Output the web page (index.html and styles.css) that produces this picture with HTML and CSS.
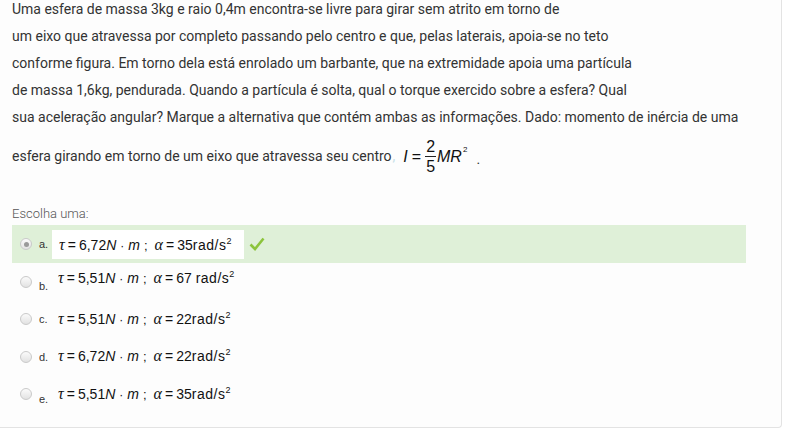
FILE: index.html
```html
<!DOCTYPE html>
<html lang="pt">
<head>
<meta charset="utf-8">
<title>Questão</title>
<link rel="stylesheet" href="styles.css">
</head>
<body>
<div class="card">
  <div class="qtext">
    <p>Uma esfera de massa 3kg e raio 0,4m encontra-se livre para girar sem atrito em torno de<br>
    um eixo que atravessa por completo passando pelo centro e que, pelas laterais, apoia-se no teto<br>
    conforme figura. Em torno dela está enrolado um barbante, que na extremidade apoia uma partícula<br>
    de massa 1,6kg, pendurada. Quando a partícula é solta, qual o torque exercido sobre a esfera? Qual<br>
    sua aceleração angular? Marque a alternativa que contém ambas as informações. Dado: momento de inércia de uma<br>
    <span class="lastline">esfera girando em torno de um eixo que atravessa seu centro<span class="faint">,</span><span class="eq"><i class="iv">I</i><span class="op">=</span><span class="frac"><span class="num">2</span><span class="den">5</span></span><i class="mr">MR</i><span class="sq">2</span></span><span class="dot">.</span></span></p>
  </div>
  <div class="ablock">
    <div class="prompt">Escolha uma:</div>
    <div class="answer">
      <div class="opt correct">
        <span class="radio checked"></span>
        <span class="lbl">a.</span>
        <span class="math boxed"><i class="gk">τ</i><span class="op">=</span>6,72<i>N</i><span class="cd">·</span><i>m</i><span class="semi">;</span><i class="gk">α</i><span class="op">=</span>35<span class="u">rad/s</span><sup>2</sup></span>
        <svg class="check" width="16" height="14" viewBox="0 0 16 14"><path d="M1.5 7.5 L6 12 L14.5 1.5" fill="none" stroke="#8cc43c" stroke-width="2.6" stroke-linejoin="miter"/></svg>
      </div>
      <div class="opt">
        <span class="radio"></span>
        <span class="lbl low">b.</span>
        <span class="math up"><i class="gk">τ</i><span class="op">=</span>5,51<i>N</i><span class="cd">·</span><i>m</i><span class="semi">;</span><i class="gk">α</i><span class="op">=</span>67 <span class="u">rad/s</span><sup>2</sup></span>
      </div>
      <div class="opt">
        <span class="radio"></span>
        <span class="lbl">c.</span>
        <span class="math"><i class="gk">τ</i><span class="op">=</span>5,51<i>N</i><span class="cd">·</span><i>m</i><span class="semi">;</span><i class="gk">α</i><span class="op">=</span>22<span class="u">rad/s</span><sup>2</sup></span>
      </div>
      <div class="opt">
        <span class="radio"></span>
        <span class="lbl">d.</span>
        <span class="math"><i class="gk">τ</i><span class="op">=</span>6,72<i>N</i><span class="cd">·</span><i>m</i><span class="semi">;</span><i class="gk">α</i><span class="op">=</span>22<span class="u">rad/s</span><sup>2</sup></span>
      </div>
      <div class="opt">
        <span class="radio"></span>
        <span class="lbl low">e.</span>
        <span class="math"><i class="gk">τ</i><span class="op">=</span>5,51<i>N</i><span class="cd">·</span><i>m</i><span class="semi">;</span><i class="gk">α</i><span class="op">=</span>35<span class="u">rad/s</span><sup>2</sup></span>
      </div>
    </div>
  </div>
</div>
</body>
</html>
```
FILE: styles.css
```css
html, body {
  margin: 0;
  padding: 0;
  background: #ffffff;
}
body {
  font-family: Roboto, "Liberation Sans", Arial, sans-serif;
  color: #333333;
  overflow: hidden;
}
.card {
  width: 782px;
  height: 428px;
  box-sizing: border-box;
  background: #fdfdfd;
  border-right: 1px solid #e3e3e3;
  border-bottom: 1px solid #e3e3e3;
  border-bottom-right-radius: 4px;
  padding: 1px 0 0 12px;
}
.qtext p {
  margin: -5px 0 0 0;
  font-size: 14px;
  line-height: 27px;
}
.lastline {
  display: inline-flex;
  align-items: center;
  height: 46px;
  margin-top: 2px;
}
.faint {
  color: #c8dfe8;
  margin: 0 8px 0 1px;
}
.eq {
  display: inline-flex;
  align-items: center;
  font-family: "Liberation Sans", Arial, sans-serif;
  font-size: 16px;
  color: #111;
}
.eq .iv {
  font-style: italic;
  margin-right: 1px;
}
.eq .op {
  margin: 0 3px;
}
.frac {
  display: inline-flex;
  flex-direction: column;
  align-items: center;
  font-size: 16px;
  line-height: 17px;
  margin: 0 1px;
}
.frac .num {
  border-bottom: 1px solid #222;
  padding: 0 1px 1px;
}
.frac .den {
  padding-top: 1px;
}
.eq .mr {
  font-style: italic;
}
.eq .sq {
  font-size: 8px;
  line-height: 8px;
  position: relative;
  top: -6px;
  margin-left: 1px;
}
.dot {
  margin-left: 9px;
  margin-top: 6px;
}
.ablock {
  margin-top: 27px;
}
.prompt {
  font-size: 13px;
  font-weight: 300;
  color: #555;
  line-height: 16px;
  height: 17px;
}
.answer {
  margin-top: 2px;
  width: 734px;
}
.opt {
  display: flex;
  align-items: center;
  height: 37.5px;
  padding-left: 8px;
}
.opt.correct {
  background: #dff0d8;
  height: 38px;
}
.radio {
  width: 12px;
  height: 12px;
  border-radius: 50%;
  border: 1px solid #cacaca;
  background: linear-gradient(#fbfbfb, #e2e2e2);
  box-sizing: border-box;
  display: flex;
  align-items: center;
  justify-content: center;
  flex: none;
}
.radio.checked::after {
  content: "";
  width: 5px;
  height: 5px;
  border-radius: 50%;
  background: #9a9a9a;
}
.lbl {
  font-family: "Liberation Sans", Arial, sans-serif;
  font-size: 11px;
  color: #333;
  margin-left: 7px;
  width: 13px;
}
.lbl.low {
  margin-top: 9px;
}
.math {
  font-family: "Liberation Sans", Arial, sans-serif;
  font-size: 14px;
  line-height: 20px;
  color: #111;
  display: inline-block;
  white-space: nowrap;
  margin-left: 6px;
}
.math.boxed {
  background: #ffffff;
  line-height: 29px;
  height: 29px;
  padding: 0 13px 0 7px;
  margin-left: 0;
}
.math.up {
  margin-top: -6px;
}
.math i {
  font-style: italic;
}
.math .gk {
  font-family: "Liberation Serif", "Times New Roman", serif;
  font-size: 16px;
}
.math .op {
  margin: 0 3px;
}
.math .cd {
  margin: 0 4px;
  font-size: 12px;
}
.math .semi {
  margin: 0 7px 0 4px;
  font-size: 13px;
}
.math .u {
  letter-spacing: 0.5px;
}
.math sup {
  font-size: 9px;
  line-height: 0;
  vertical-align: 6px;
  margin-left: 0;
}
.check {
  margin-left: 5px;
}
```
